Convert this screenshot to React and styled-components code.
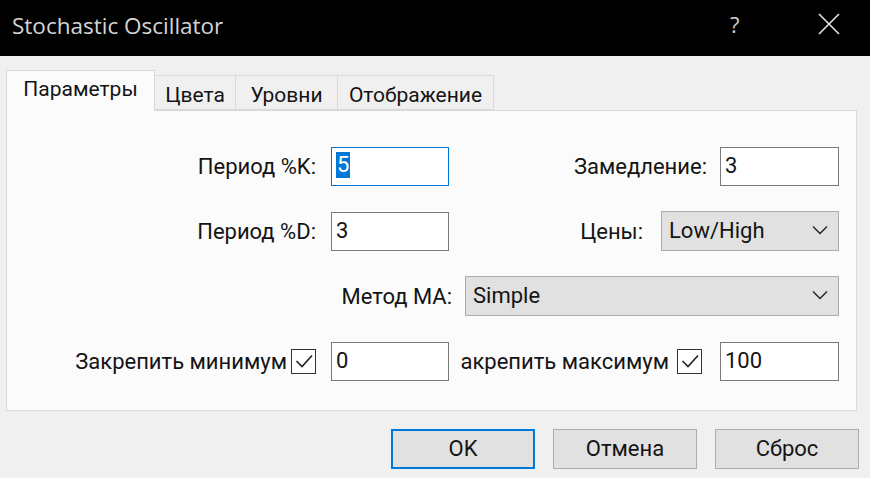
import React from "react";
import styled, { createGlobalStyle } from "styled-components";

const Global = createGlobalStyle`
  html, body { margin: 0; padding: 0; background: #f0f0f0; }
  body { width: 870px; height: 478px; overflow: hidden; }
  * { box-sizing: border-box; }
`;

const Window = styled.div`
  width: 870px;
  height: 478px;
  display: flex;
  flex-direction: column;
  background: #f0f0f0;
  font-family: Roboto, "Liberation Sans", Arial, sans-serif;
  color: #141414;
`;

const TitleBar = styled.div`
  height: 56px;
  background: #000;
  display: flex;
  align-items: center;
  padding-left: 12px;
`;

const Title = styled.div`
  flex: 1;
  font-family: "Open Sans", "Noto Sans", sans-serif;
  font-size: 22.5px;
  color: #d4d4d4;
  margin-top: -6px;
`;

const HelpButton = styled.div`
  font-family: "Open Sans", "Noto Sans", sans-serif;
  font-size: 22px;
  color: #cfcfcf;
  width: 20px;
  margin-right: 68px;
  margin-top: -8px;
`;

const CloseButton = styled.div`
  width: 22px;
  height: 22px;
  margin-right: 30px;
  margin-top: -8px;
  display: flex;
`;

const Body = styled.div`
  flex: 1;
  display: flex;
  flex-direction: column;
  padding: 14px 13px 0 6px;
`;

const TabStrip = styled.div`
  display: flex;
  align-items: flex-end;
  height: 40px;
  position: relative;
  z-index: 1;
`;

const Tab = styled.div`
  height: ${(p) => (p.$active ? "41px" : "35px")};
  margin-bottom: ${(p) => (p.$active ? "-1px" : "0")};
  width: ${(p) => p.$w}px;
  border: 1px solid #d9d9d9;
  border-bottom: ${(p) => (p.$active ? "none" : "1px solid #d9d9d9")};
  border-left: ${(p) => (p.$first || p.$active ? "1px solid #d9d9d9" : "none")};
  background: ${(p) => (p.$active ? "#fbfbfb" : "#f0f0f0")};
  font-size: 21px;
  display: flex;
  align-items: center;
  justify-content: center;
  padding-top: ${(p) => (p.$active ? "0" : "4px")};
  padding-bottom: ${(p) => (p.$active ? "4px" : "0")};
  white-space: nowrap;
`;

const Panel = styled.div`
  height: 301px;
  border: 1px solid #d9d9d9;
  background: #fbfbfb;
  padding: 35px 17px 0 0;
  display: flex;
  flex-direction: column;
  gap: 25px;
`;

const Row = styled.div`
  height: 40px;
  display: flex;
  align-items: center;
  justify-content: flex-end;
`;

const LeftGroup = styled.div`
  width: 442px;
  display: flex;
  align-items: center;
  justify-content: flex-end;
`;

const RightGroup = styled.div`
  flex: 1;
  display: flex;
  align-items: center;
  justify-content: flex-end;
`;

const Label = styled.div`
  font-size: 22px;
  white-space: nowrap;
  margin-right: ${(p) => p.$gap ?? 14}px;
`;

const Field = styled.div`
  width: ${(p) => p.$w ?? 119}px;
  height: 39px;
  background: #fff;
  border: 1px solid ${(p) => (p.$focused ? "#0078d7" : "#7a7a7a")};
  font-size: 22px;
  display: flex;
  align-items: center;
  padding-left: 4px;
  padding-bottom: 2px;
`;

const Selected = styled.span`
  background: #0078d7;
  color: #fff;
  padding: 0 1px;
  line-height: 26px;
`;

const Select = styled.div`
  width: ${(p) => p.$w}px;
  height: 40px;
  background: #e1e1e1;
  border: 1px solid #adadad;
  font-size: 22px;
  display: flex;
  align-items: center;
  justify-content: space-between;
  padding: 0 10px 2px 7px;
`;

const Check = styled.div`
  width: 25px;
  height: 25px;
  border: 1.5px solid #333;
  background: #fff;
  display: flex;
  align-items: center;
  justify-content: center;
  margin-right: ${(p) => p.$gap}px;
`;

const Footer = styled.div`
  display: flex;
  justify-content: flex-end;
  gap: 18px;
  padding-top: 18px;
  margin-right: -2px;
`;

const Button = styled.div`
  width: 144px;
  height: 40px;
  background: #e1e1e1;
  border: ${(p) => (p.$primary ? "2px solid #0078d7" : "1px solid #adadad")};
  font-size: 22px;
  display: flex;
  align-items: center;
  justify-content: center;
  padding-bottom: 2px;
`;

const Chevron = () => (
  <svg width="16" height="10" viewBox="0 0 16 10">
    <path d="M1 1.5 L8 8.5 L15 1.5" fill="none" stroke="#222" strokeWidth="1.4" />
  </svg>
);

const Tick = () => (
  <svg width="20" height="16" viewBox="0 0 20 16">
    <path d="M2.5 8 L8 13.5 L18 2.5" fill="none" stroke="#222" strokeWidth="1.6" />
  </svg>
);

export default function App() {
  return (
    <>
      <Global />
      <Window>
        <TitleBar>
          <Title>Stochastic Oscillator</Title>
          <HelpButton>?</HelpButton>
          <CloseButton>
            <svg width="22" height="22" viewBox="0 0 22 22">
              <path d="M1 1 L21 21 M21 1 L1 21" stroke="#e6e6e6" strokeWidth="1.6" />
            </svg>
          </CloseButton>
        </TitleBar>
        <Body>
          <TabStrip>
            <Tab $active $first $w={149}>Параметры</Tab>
            <Tab $w={81}>Цвета</Tab>
            <Tab $w={102}>Уровни</Tab>
            <Tab $w={156}>Отображение</Tab>
          </TabStrip>
          <Panel>
            <Row>
              <LeftGroup>
                <Label $gap={15}>Период %K:</Label>
                <Field $focused $w={118}>
                  <Selected>5</Selected>
                </Field>
              </LeftGroup>
              <RightGroup>
                <Label $gap={13}>Замедление:</Label>
                <Field>3</Field>
              </RightGroup>
            </Row>
            <Row>
              <LeftGroup>
                <Label $gap={15}>Период %D:</Label>
                <Field $w={118}>3</Field>
              </LeftGroup>
              <RightGroup>
                <Label $gap={18}>Цены:</Label>
                <Select $w={178}>
                  Low/High
                  <Chevron />
                </Select>
              </RightGroup>
            </Row>
            <Row>
              <Label $gap={13}>Метод MA:</Label>
              <Select $w={374}>
                Simple
                <Chevron />
              </Select>
            </Row>
            <Row>
              <LeftGroup>
                <Label $gap={4}>Закрепить минимум</Label>
                <Check $gap={15}>
                  <Tick />
                </Check>
                <Field $w={118}>0</Field>
              </LeftGroup>
              <RightGroup>
                <Label $gap={8}>акрепить максимум</Label>
                <Check $gap={18}>
                  <Tick />
                </Check>
                <Field>100</Field>
              </RightGroup>
            </Row>
          </Panel>
          <Footer>
            <Button $primary>OK</Button>
            <Button>Отмена</Button>
            <Button>Сброс</Button>
          </Footer>
        </Body>
      </Window>
    </>
  );
}
